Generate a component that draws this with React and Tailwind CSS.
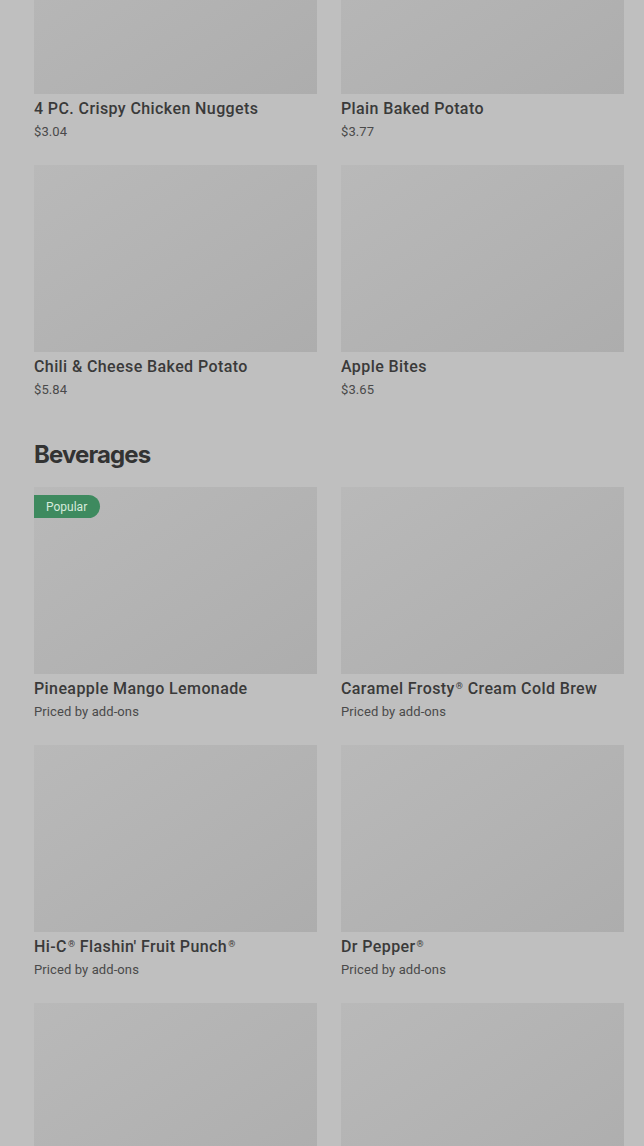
import React from 'react';

const sides = [
  { name: '4 PC. Crispy Chicken Nuggets', price: '$3.04' },
  { name: 'Plain Baked Potato', price: '$3.77' },
  { name: 'Chili & Cheese Baked Potato', price: '$5.84' },
  { name: 'Apple Bites', price: '$3.65' },
];

const beverages = [
  { name: 'Pineapple Mango Lemonade', price: 'Priced by add-ons', popular: true },
  { name: 'Caramel Frosty® Cream Cold Brew', price: 'Priced by add-ons' },
  { name: 'Hi-C® Flashin\' Fruit Punch®', price: 'Priced by add-ons' },
  { name: 'Dr Pepper®', price: 'Priced by add-ons' },
  { name: '', price: '' },
  { name: '', price: '' },
];

// render ® as small raised mark like the menu does
const withMarks = (name) =>
  name.split('®').map((part, i, arr) => (
    <React.Fragment key={i}>
      {part}
      {i < arr.length - 1 && <span className="relative -top-[5px] text-[9px] leading-none ml-[1px]">®</span>}
    </React.Fragment>
  ));

const ItemCard = ({ item }) => (
  <div className="flex flex-col">
    <div className="relative h-[187px] bg-gradient-to-br from-[#b9b9b9] to-[#adadad]">
      {item.popular && (
        <span className="absolute left-0 top-2 h-[23px] pl-3 pr-[13px] flex items-center rounded-r-full bg-[#3e8a5f] text-[12px] text-[#d6ebdd]">
          Popular
        </span>
      )}
    </div>
    <div className="mt-[5px] h-5 text-[16px] leading-5 font-medium tracking-[0.4px] text-[#3a3a3a] truncate">{withMarks(item.name)}</div>
    <div className="mt-[2px] h-[21px] text-[13px] leading-[22px] tracking-[0.1px] text-[#4a4a4a]">{item.price}</div>
  </div>
);

export default function App() {
  return (
    <div className="min-h-[1146px] h-[1146px] overflow-hidden bg-[#bfbfbf] pl-[34px] pr-5 font-['Roboto',sans-serif]">
      <div className="mt-[-93px] grid grid-cols-2 gap-x-6 gap-y-[23px]">
        {sides.map((it, i) => <ItemCard key={i} item={it} />)}
      </div>
      <h2 className="mt-[39px] text-[24px] leading-8 font-bold tracking-[-0.9px] text-[#333333] font-['Inter',sans-serif]">Beverages</h2>
      <div className="mt-[16px] grid grid-cols-2 gap-x-6 gap-y-[23px]">
        {beverages.map((it, i) => <ItemCard key={i} item={it} />)}
      </div>
    </div>
  );
}
